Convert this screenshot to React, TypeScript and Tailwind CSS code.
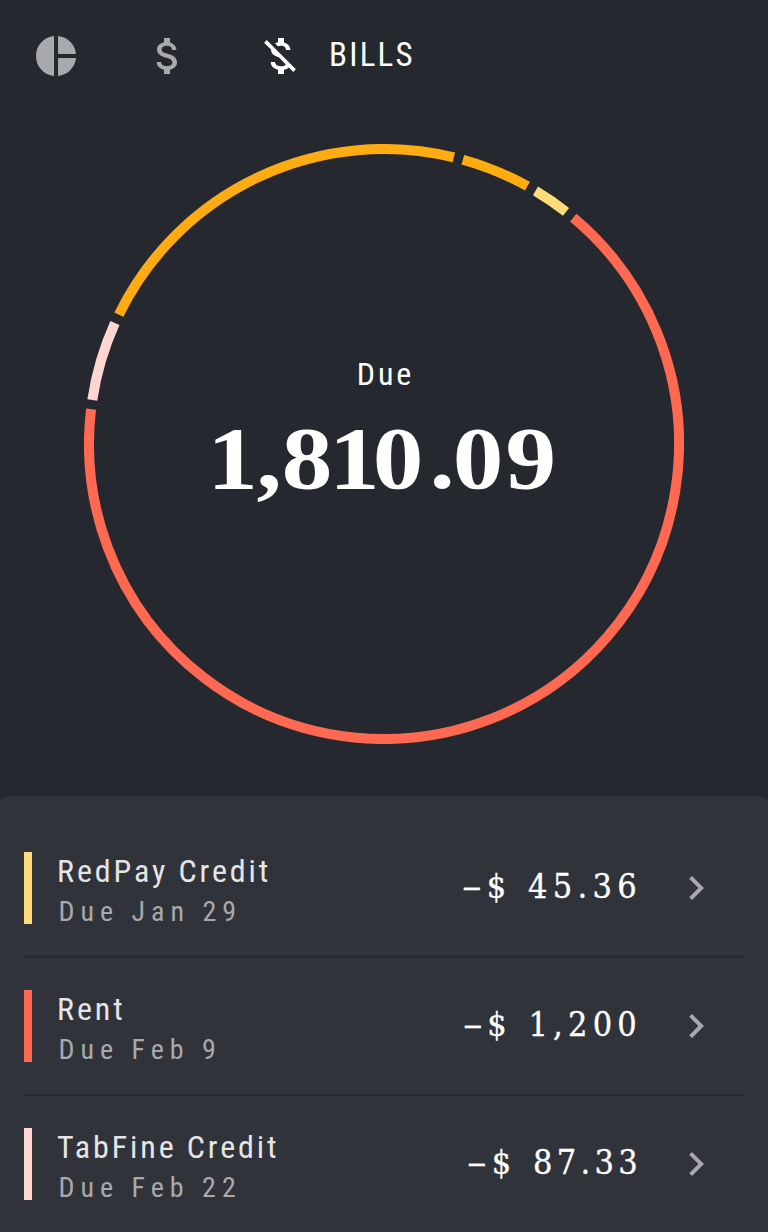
const PIE =
  "M11 2v20c-5.07-.5-9-4.79-9-10s3.93-9.5 9-10zm2.03 0v8.99H22c-.47-4.74-4.24-8.52-8.97-8.99zm0 11.01V22c4.74-.47 8.5-4.25 8.97-8.99h-8.97z";
const DOLLAR =
  "M11.8 10.9c-2.27-.59-3-1.2-3-2.15 0-1.09 1.01-1.85 2.7-1.85 1.78 0 2.44.85 2.5 2.1h2.21c-.07-1.72-1.12-3.3-3.21-3.81V3h-3v2.16c-1.94.42-3.5 1.68-3.5 3.61 0 2.31 1.91 3.46 4.7 4.13 2.5.6 3 1.48 3 2.41 0 .69-.49 1.79-2.7 1.79-2.06 0-2.87-.92-2.98-2.1h-2.2c.12 2.19 1.76 3.42 3.68 3.83V21h3v-2.15c1.95-.37 3.5-1.5 3.5-3.55 0-2.84-2.43-3.81-4.7-4.4z";
const DOLLAR_OFF =
  "M12.5 6.9c1.78 0 2.44.85 2.5 2.1h2.21c-.07-1.72-1.12-3.3-3.21-3.81V3h-3v2.16c-.53.12-1.03.3-1.48.54l1.47 1.47c.41-.17.91-.27 1.51-.27zM5.33 4.06L4.06 5.33 7.5 8.77c0 2.08 1.56 3.21 3.91 3.91l3.51 3.51c-.34.48-1.05.91-2.42.91-2.06 0-2.87-.92-2.98-2.1h-2.2c.12 2.19 1.76 3.42 3.68 3.83V21h3v-2.15c.96-.18 1.82-.55 2.45-1.12l2.22 2.22 1.27-1.27L5.33 4.06z";
const CHEVRON = "M10 6L8.59 7.41 13.17 12l-4.58 4.59L10 18l6-6z";

function Icon({ d, className }: { d: string; className: string }) {
  return (
    <svg viewBox="0 0 24 24" className={`size-12 shrink-0 fill-current ${className}`}>
      <path d={d} />
    </svg>
  );
}

const segments = [
  { from: -64, to: 13.7, color: "#ffac12" },
  { from: 15.5, to: 29.1, color: "#ffac12" },
  { from: 30.9, to: 38.1, color: "#ffdc78" },
  { from: 39.9, to: 276.8, color: "#ff6951" },
  { from: 278.6, to: 294.2, color: "#ffd7d0" },
];

function arc(from: number, to: number) {
  const point = (deg: number) => {
    const a = (deg * Math.PI) / 180;
    return `${300 + 295 * Math.sin(a)} ${300 - 295 * Math.cos(a)}`;
  };
  return `M${point(from)} A295 295 0 ${to - from > 180 ? 1 : 0} 1 ${point(to)}`;
}

const bills = [
  { name: "RedPay Credit", due: "Due Jan 29", amount: "45.36", bar: "bg-[#ffdc78]", tracking: "tracking-[5.3px]" },
  { name: "Rent", due: "Due Feb 9", amount: "1,200", bar: "bg-[#ff6951]", tracking: "tracking-[5.2px]" },
  { name: "TabFine Credit", due: "Due Feb 22", amount: "87.33", bar: "bg-[#ffd7d0]", tracking: "tracking-[4.3px]" },
];

export default function App() {
  return (
    <div className="flex h-[1232px] w-[768px] flex-col overflow-hidden bg-[#26282f] font-['Roboto_Condensed','Roboto',sans-serif] text-white [font-stretch:75%]">
      <nav className="flex h-28 shrink-0 items-center pl-8">
        <Icon d={PIE} className="text-[#a8a9ac]" />
        <Icon d={DOLLAR} className="ml-16 text-[#a8a9ac]" />
        <Icon d={DOLLAR_OFF} className="ml-16" />
        <span className="ml-[25px] pb-0.5 text-[33px] leading-10 tracking-[2.2px]">BILLS</span>
      </nav>

      <section className="mx-auto mt-8 grid size-[600px] shrink-0 place-items-center">
        <svg viewBox="0 0 600 600" className="col-start-1 row-start-1 size-full" fill="none" strokeWidth="10">
          {segments.map((s) => (
            <path key={s.from} d={arc(s.from, s.to)} stroke={s.color} />
          ))}
        </svg>
        <div className="col-start-1 row-start-1 flex flex-col items-center pb-[26px]">
          <span className="pl-[3px] text-[32px] leading-10 tracking-[3px]">Due</span>
          <span className="mt-[15px] mr-1 origin-center scale-x-115 font-['Liberation_Serif',serif] text-[88px] leading-[100px] font-bold whitespace-nowrap">
            <span className="tracking-[-1.2px]">1</span>,
            <span className="tracking-[-3px]">8</span>
            <span className="tracking-[-6px]">1</span>
            <span className="tracking-[5.4px]">0</span>
            <span className="tracking-[-1.7px]">.</span>
            <span className="tracking-[1.8px]">0</span>9
          </span>
        </div>
      </section>

      <section className="mt-[52px] flex flex-1 flex-col rounded-t-lg bg-[#31333b] px-6 pt-6">
        {bills.map((b) => (
          <div key={b.name} className="flex h-[138px] shrink-0 items-center border-b-2 border-[#26282f]">
            <div className={`h-[72px] w-2 ${b.bar}`} />
            <div className="ml-[25px] flex flex-col pt-1.5">
              <span className="text-[32px] leading-10 tracking-[2.9px] text-[#e5e5e6]">{b.name}</span>
              <span className="pl-[1.5px] text-[28px] leading-[41px] tracking-[6px] text-[#a8a9ac]">{b.due}</span>
            </div>
            <div className="mr-1.5 ml-auto pb-1 font-['DejaVu_Serif',serif] text-[34px] leading-10 [-webkit-text-stroke:0.3px]">
              <span className="mr-[5px] inline-block origin-right scale-x-125">–</span>
              <span className="tracking-[6px]">$ </span>
              <span className={b.tracking}>{b.amount}</span>
            </div>
            <Icon d={CHEVRON} className="mr-6 ml-6 text-[#a8a9ac]" />
          </div>
        ))}
      </section>
    </div>
  );
}
